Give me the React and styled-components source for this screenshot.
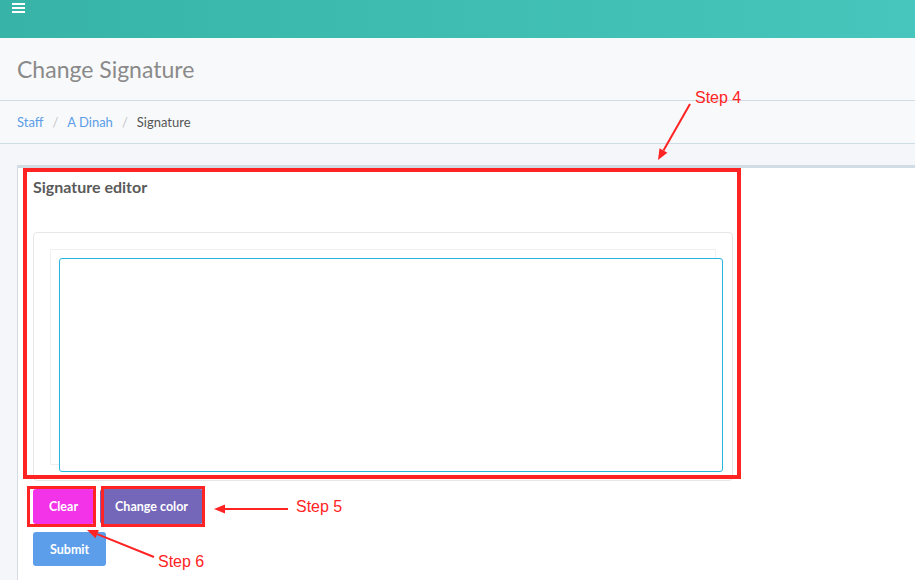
import React from "react";
import styled, { createGlobalStyle } from "styled-components";

const GlobalStyle = createGlobalStyle`
  html, body {
    margin: 0;
    padding: 0;
    background: #f4f6f9;
    font-family: Lato, "Open Sans", sans-serif;
  }
`;

const Page = styled.div`
  position: relative;
  width: 915px;
  height: 580px;
  overflow: hidden;
  background: #f4f6f9;
`;

const TopBar = styled.div`
  height: 38px;
  background: linear-gradient(90deg, #37b4a7, #46c6bc);
  display: flex;
  align-items: flex-start;
  padding: 3px 12px 0;
  box-sizing: border-box;
`;

const Hamburger = styled.div`
  display: flex;
  flex-direction: column;
  gap: 2px;
  width: 13px;

  span {
    display: block;
    height: 2px;
    background: #fff;
  }
`;

const HeaderBand = styled.div`
  background: #f8f9fb;
  border-bottom: 1px solid #cfdde6;
  box-sizing: border-box;
  height: ${(p) => p.$h}px;
  display: flex;
  align-items: center;
  padding-left: 17px;
`;

const Title = styled.h1`
  margin: 0;
  font-size: 23px;
  font-weight: 400;
  color: #8a8a8a;
`;

const Crumbs = styled.div`
  display: flex;
  align-items: center;
  gap: 9px;
  font-size: 13px;
  color: #555;
`;

const CrumbLink = styled.a`
  color: #5b9de8;
  text-decoration: none;
`;

const Sep = styled.span`
  color: #c4c4c4;
`;

const Content = styled.div`
  padding: 21px 0 0 17px;
`;

const Card = styled.div`
  background: #fff;
  border-top: 3px solid #d1dde5;
  border-left: 1px solid #d6dbe0;
  padding: 8px 0 0 15px;
  height: 420px;
  box-sizing: border-box;
`;

const CardTitle = styled.h3`
  margin: 0;
  font-size: 16px;
  font-weight: 700;
  color: #5a5a5a;
  line-height: 22px;
`;

const Panel = styled.div`
  margin-top: 34px;
  width: 700px;
  height: 249px;
  border: 1px solid #e6e6e6;
  border-radius: 4px;
  box-sizing: border-box;
  padding: 16px;
`;

const InnerFrame = styled.div`
  width: 666px;
  height: 216px;
  border: 1px solid #f0f0f0;
  box-sizing: border-box;
  padding: 8px;
`;

const Canvas = styled.div`
  width: 664px;
  height: 214px;
  border: 1px solid #2ab5df;
  border-radius: 3px;
  box-sizing: border-box;
  background: #fff;
`;

const ButtonRow = styled.div`
  display: flex;
  gap: 6px;
  margin-top: 8px;
`;

const Button = styled.button`
  border: none;
  border-radius: 3px;
  height: ${(p) => p.$h || 35}px;
  padding: 0 ${(p) => p.$px || 14}px;
  background: ${(p) => p.$bg};
  color: #fff;
  font-family: Lato, "Open Sans", sans-serif;
  font-size: 12.5px;
  font-weight: 700;
  cursor: pointer;
`;

const SubmitRow = styled.div`
  margin-top: 8px;
`;

const Overlay = styled.svg`
  position: absolute;
  inset: 0;
  pointer-events: none;
`;

const StepLabel = styled.span`
  position: absolute;
  font-family: "Liberation Sans", Arial, sans-serif;
  font-size: 16px;
  color: #ff2323;
  line-height: 1;
`;

const RED = "#ff2323";

const Arrow = ({ x1, y1, x2, y2 }) => {
  const a = Math.atan2(y2 - y1, x2 - x1);
  const len = 11;
  const w = 4.5;
  const bx = x2 - len * Math.cos(a);
  const by = y2 - len * Math.sin(a);
  const px = -Math.sin(a) * w;
  const py = Math.cos(a) * w;
  return (
    <g>
      <line x1={x1} y1={y1} x2={bx} y2={by} stroke={RED} strokeWidth="2" />
      <polygon
        points={`${x2},${y2} ${bx + px},${by + py} ${bx - px},${by - py}`}
        fill={RED}
      />
    </g>
  );
};

export default function App() {
  return (
    <Page>
      <GlobalStyle />
      <TopBar>
        <Hamburger>
          <span />
          <span />
          <span />
        </Hamburger>
      </TopBar>
      <HeaderBand $h={63}>
        <Title>Change Signature</Title>
      </HeaderBand>
      <HeaderBand $h={43}>
        <Crumbs>
          <CrumbLink href="#">Staff</CrumbLink>
          <Sep>/</Sep>
          <CrumbLink href="#">A Dinah</CrumbLink>
          <Sep>/</Sep>
          <span>Signature</span>
        </Crumbs>
      </HeaderBand>
      <Content>
        <Card>
          <CardTitle>Signature editor</CardTitle>
          <Panel>
            <InnerFrame>
              <Canvas />
            </InnerFrame>
          </Panel>
          <ButtonRow>
            <Button $bg="#f233e7" $px={16}>Clear</Button>
            <Button $bg="#7467b9" $px={15}>Change color</Button>
          </ButtonRow>
          <SubmitRow>
            <Button $bg="#5c9eea" $h={34} $px={17}>Submit</Button>
          </SubmitRow>
        </Card>
      </Content>

      <Overlay width="915" height="580">
        <rect x="25" y="170" width="714" height="307" fill="none" stroke={RED} strokeWidth="4" />
        <rect x="28.5" y="487.5" width="66" height="38" fill="none" stroke={RED} strokeWidth="3" />
        <rect x="102.5" y="487.5" width="101" height="38" fill="none" stroke={RED} strokeWidth="3" />
        <Arrow x1={690} y1={104} x2={658} y2={160} />
        <Arrow x1={288} y1={509} x2={214} y2={509} />
        <Arrow x1={154} y1={557} x2={87} y2={530} />
      </Overlay>
      <StepLabel style={{ left: 695, top: 90 }}>Step 4</StepLabel>
      <StepLabel style={{ left: 296, top: 499 }}>Step 5</StepLabel>
      <StepLabel style={{ left: 158, top: 554 }}>Step 6</StepLabel>
    </Page>
  );
}
